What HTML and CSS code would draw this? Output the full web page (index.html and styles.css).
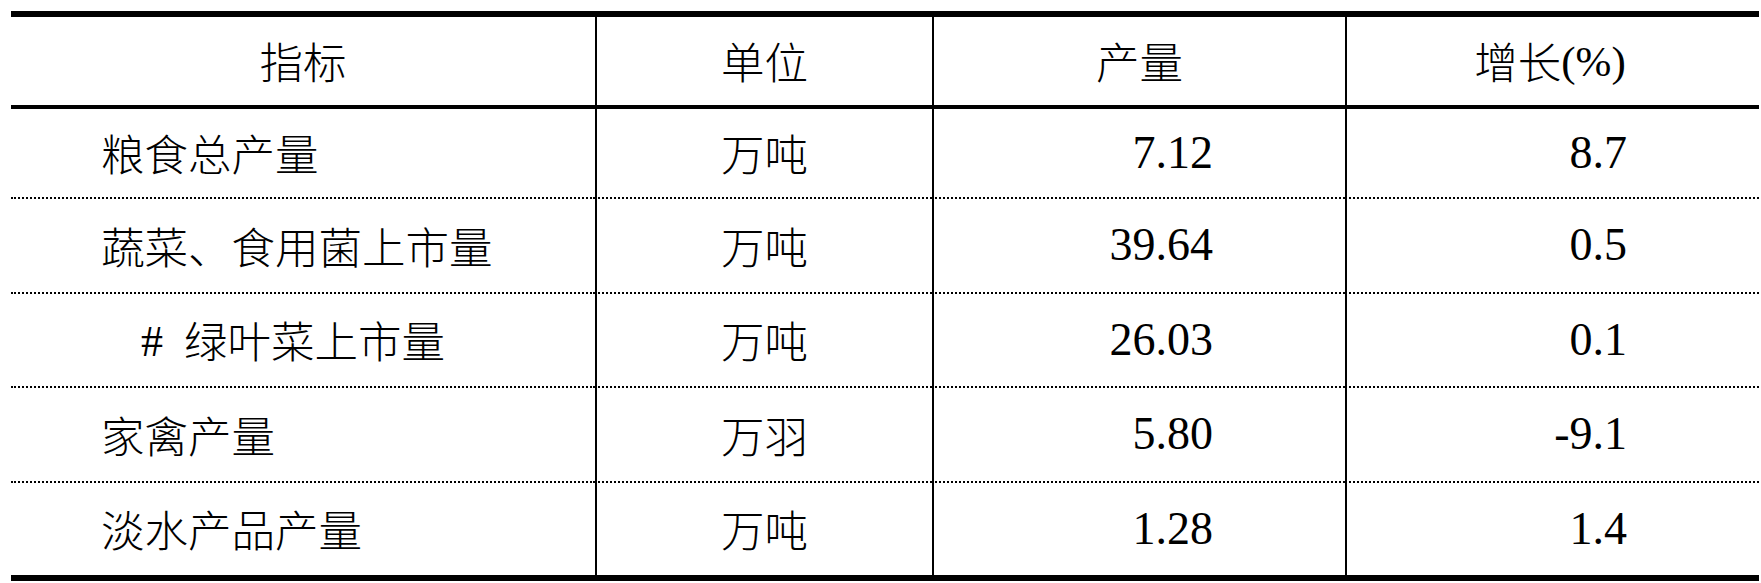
FILE: index.html
```html
<!DOCTYPE html>
<html lang="zh-CN">
<head>
<meta charset="utf-8">
<title>主要农产品产量</title>
<link rel="stylesheet" href="styles.css">
</head>
<body>
<div class="table">
  <div class="cell head c1">指标</div>
  <div class="cell head c2 sep">单位</div>
  <div class="cell head c3 sep">产量</div>
  <div class="cell head c4 sep">增长<span class="latin">(%)</span></div>

  <div class="cell first name">粮食总产量</div>
  <div class="cell first unit sep">万吨</div>
  <div class="cell first num sep">7.12</div>
  <div class="cell first num sep">8.7</div>

  <div class="cell row name">蔬菜、食用菌上市量</div>
  <div class="cell row unit sep">万吨</div>
  <div class="cell row num sep">39.64</div>
  <div class="cell row num sep">0.5</div>

  <div class="cell row name"><span class="indent"><span class="hash">#</span></span>绿叶菜上市量</div>
  <div class="cell row unit sep">万吨</div>
  <div class="cell row num sep">26.03</div>
  <div class="cell row num sep">0.1</div>

  <div class="cell row name">家禽产量</div>
  <div class="cell row unit sep">万羽</div>
  <div class="cell row num sep">5.80</div>
  <div class="cell row num sep">-9.1</div>

  <div class="cell row name">淡水产品产量</div>
  <div class="cell row unit sep">万吨</div>
  <div class="cell row num sep">1.28</div>
  <div class="cell row num sep">1.4</div>
</div>
</body>
</html>
```

FILE: styles.css
```css
html, body {
  margin: 0;
  padding: 0;
  background: #ffffff;
}

body {
  padding: 11px 0 0 11px;
  font-family: "Noto Sans CJK SC", "Noto Sans", sans-serif;
  font-weight: 300;
  color: #000;
}

.table {
  display: grid;
  width: 1748px;
  grid-template-columns: 584px 337px 413px 414px;
  grid-template-rows: 92px 88px 94.5px 94.5px 94.5px 94.5px;
  border-top: 6px solid #000;
  border-bottom: 6px solid #000;
}

.cell {
  box-sizing: border-box;
  display: flex;
  align-items: center;
  font-size: 43.5px;
  line-height: 1;
  white-space: nowrap;
}

.sep {
  border-left: 2px solid #000;
}

.head {
  justify-content: center;
  border-bottom: 4px solid #000;
}

.head.c4 {
  padding-right: 6px;
}

.row {
  border-top: 2px dotted #000;
}

.name {
  padding-left: 90px;
}

.unit {
  justify-content: center;
}

.num {
  justify-content: flex-end;
  padding-right: 132px;
  font-family: "Liberation Serif", serif;
  font-weight: 400;
  font-size: 46px;
}

.latin {
  font-family: "Liberation Serif", serif;
  font-weight: 400;
  font-size: 43px;
}

.indent {
  display: inline-block;
  padding-left: 40px;
}

.hash {
  display: inline-block;
  width: 43px;
  font-family: "Liberation Serif", serif;
  font-weight: 400;
  font-size: 44px;
}
```
